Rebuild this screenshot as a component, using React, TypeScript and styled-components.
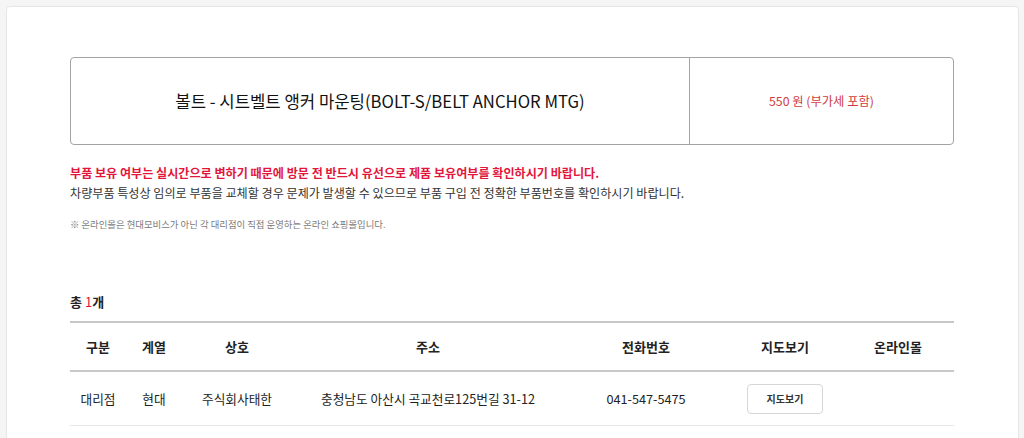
import styled, { createGlobalStyle } from 'styled-components';

const GlobalStyle = createGlobalStyle`
  html, body {
    margin: 0;
    padding: 0;
    background: #f5f5f5;
    font-family: 'Noto Sans CJK KR', 'Noto Sans', sans-serif;
    color: #222;
  }
  * { box-sizing: border-box; }
`;

const COLUMNS = '56px 56px 110px 272px 164px 114px 1fr';

const dealers = [
  {
    type: '대리점',
    group: '현대',
    name: '주식회사태한',
    address: '충청남도 아산시 곡교천로125번길 31-12',
    phone: '041-547-5475',
  },
];

const App = () => {
  return (
    <>
      <GlobalStyle />
      <Page>
        <Card>
          <ProductBox>
            <ProductName>볼트 - 시트벨트 앵커 마운팅(BOLT-S/BELT ANCHOR MTG)</ProductName>
            <ProductPrice>550 원 (부가세 포함)</ProductPrice>
          </ProductBox>

          <Notice>
            <Warning>부품 보유 여부는 실시간으로 변하기 때문에 방문 전 반드시 유선으로 제품 보유여부를 확인하시기 바랍니다.</Warning>
            <NoticeText>차량부품 특성상 임의로 부품을 교체할 경우 문제가 발생할 수 있으므로 부품 구입 전 정확한 부품번호를 확인하시기 바랍니다.</NoticeText>
          </Notice>
          <Footnote>※ 온라인몰은 현대모비스가 아닌 각 대리점이 직접 운영하는 온라인 쇼핑몰입니다.</Footnote>

          <Total>
            총 <Count>{dealers.length}</Count>개
          </Total>

          <Table>
            <HeadRow>
              <Cell>구분</Cell>
              <Cell>계열</Cell>
              <Cell>상호</Cell>
              <Cell>주소</Cell>
              <Cell>전화번호</Cell>
              <Cell>지도보기</Cell>
              <Cell>온라인몰</Cell>
            </HeadRow>
            {dealers.map((d) => (
              <BodyRow key={d.phone}>
                <Cell>{d.type}</Cell>
                <Cell>{d.group}</Cell>
                <Cell>{d.name}</Cell>
                <Cell>{d.address}</Cell>
                <Cell>{d.phone}</Cell>
                <Cell>
                  <MapButton type='button'>지도보기</MapButton>
                </Cell>
                <Cell />
              </BodyRow>
            ))}
          </Table>
        </Card>
      </Page>
    </>
  );
};

export default App;

const Page = styled.div`
  padding: 6px 5px 0 6px;
  height: 438px;
  overflow: hidden;
`;

const Card = styled.div`
  background: #fff;
  border: 1px solid #e6e6e6;
  border-radius: 4px;
  padding: 50px 64px 40px 63px;
  min-height: 600px;
`;

const ProductBox = styled.div`
  display: grid;
  grid-template-columns: 619px 1fr;
  height: 88px;
  border: 1px solid #a3a3a3;
  border-radius: 4px;
`;

const ProductName = styled.div`
  display: flex;
  align-items: center;
  justify-content: center;
  border-right: 1px solid #a3a3a3;
  font-size: 16.7px;
  color: #111;
`;

const ProductPrice = styled.div`
  display: flex;
  align-items: center;
  justify-content: center;
  font-size: 12.3px;
  color: #cf3b40;
`;

const Notice = styled.div`
  margin-top: 18px;
  font-size: 12.1px;
  line-height: 20px;
`;

const Warning = styled.p`
  margin: 0;
  font-weight: 700;
  color: #e2163b;
`;

const NoticeText = styled.p`
  margin: 0;
  color: #333;
`;

const Footnote = styled.p`
  margin: 14px 0 0;
  font-size: 9.4px;
  line-height: 14px;
  color: #7a7a7a;
`;

const Total = styled.div`
  margin-top: 61px;
  font-size: 13px;
  line-height: 20px;
  font-weight: 700;
  color: #222;
`;

const Count = styled.span`
  color: #e2163b;
  font-weight: 400;
`;

const Table = styled.div`
  margin-top: 9px;
  border-top: 2px solid #c8c8c8;
`;

const HeadRow = styled.div`
  display: grid;
  grid-template-columns: ${COLUMNS};
  height: 49px;
  align-items: center;
  border-bottom: 2px solid #c8c8c8;
  font-size: 13px;
  font-weight: 700;
  color: #222;
`;

const BodyRow = styled.div`
  display: grid;
  grid-template-columns: ${COLUMNS};
  height: 54px;
  align-items: center;
  border-bottom: 1px solid #e8e8e8;
  font-size: 12.7px;
  color: #222;
`;

const Cell = styled.div`
  text-align: center;
  white-space: nowrap;
`;

const MapButton = styled.button`
  width: 76px;
  height: 30px;
  border: 1px solid #d6d6d6;
  border-radius: 4px;
  background: #fff;
  font-family: inherit;
  font-size: 10px;
  font-weight: 700;
  color: #333;
  cursor: pointer;
`;
